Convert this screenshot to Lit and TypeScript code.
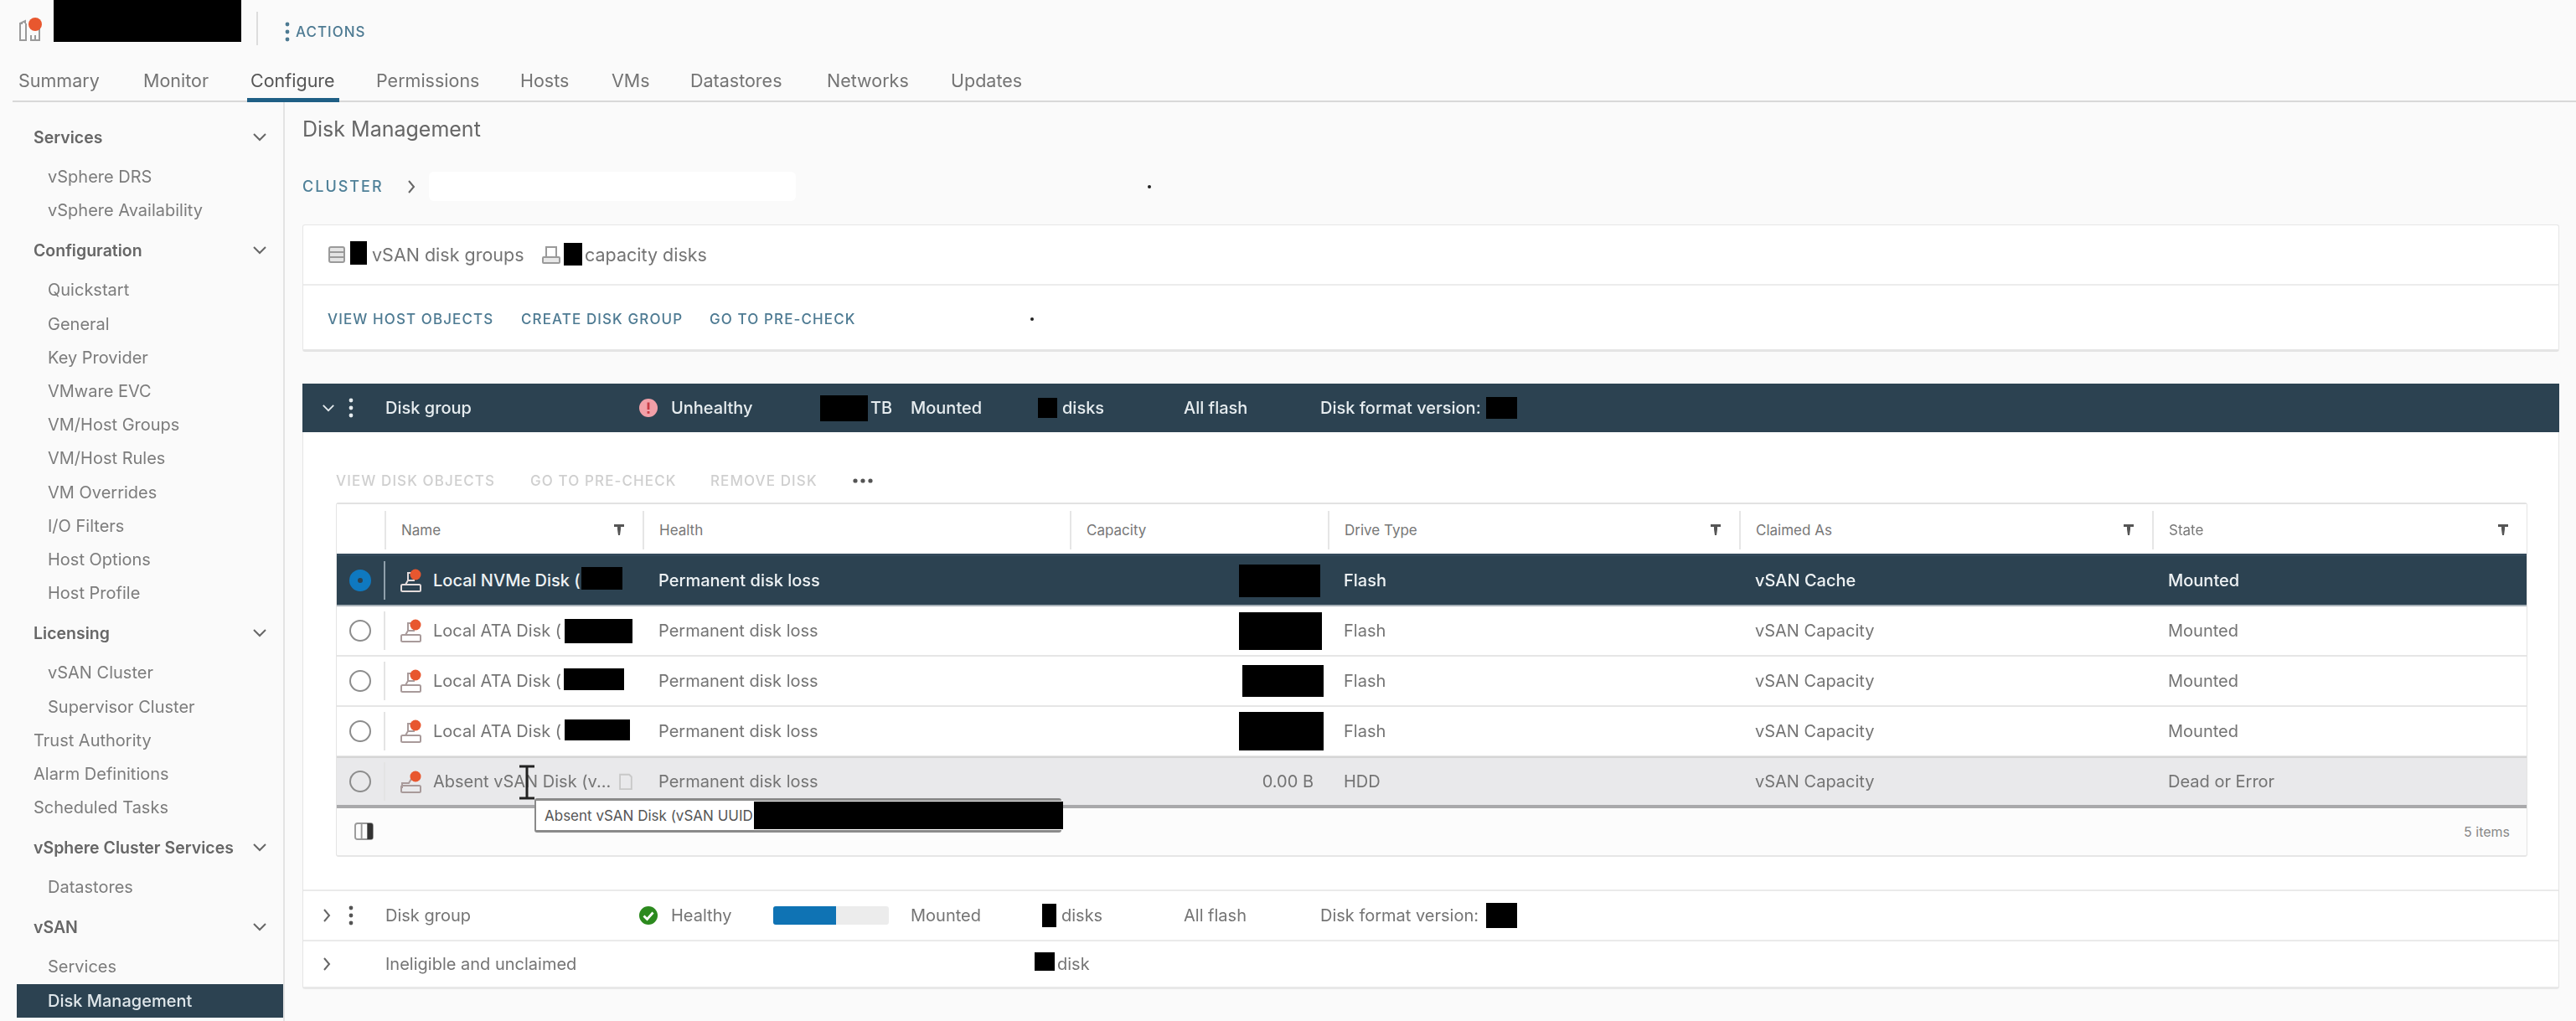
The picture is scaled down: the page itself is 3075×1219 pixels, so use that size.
import { LitElement, html, css, svg } from "lit";
import { customElement } from "lit/decorators.js";

const chevDown = (c = "#666") => html`<svg class="chev" viewBox="0 0 18 12" width="18" height="12"><path d="M2 2l7 7 7-7" fill="none" stroke=${c} stroke-width="2"/></svg>`;
const chevRight = html`<svg viewBox="0 0 12 18" width="12" height="18"><path d="M3 2l6 7-6 7" fill="none" stroke="#666" stroke-width="2"/></svg>`;
const dots = (c: string) => html`<svg viewBox="0 0 6 24" width="6" height="24"><circle cx="3" cy="3" r="2.4" fill=${c}/><circle cx="3" cy="12" r="2.4" fill=${c}/><circle cx="3" cy="21" r="2.4" fill=${c}/></svg>`;
const filterIcon = html`<svg viewBox="0 0 12 14" width="12" height="14"><path d="M0 0h12v3H8v3l-1 7H5L4 6V3H0z" fill="#555"/></svg>`;
const diskIcon = (absent: boolean, light: boolean) => {
  const s = light ? "#e4dcdc" : "#a89a9a";
  return html`<svg viewBox="0 0 26 28" width="26" height="28">
    ${absent ? svg`<path d="M2 22v-6h8l3-5h4" fill="none" stroke=${s} stroke-width="2"/>`
      : svg`<path d="M9 14V5h8M6 19l3-5h8" fill="none" stroke=${s} stroke-width="2"/>`}
    <rect x="1" y="19" width="23" height="8" rx="1.5" fill="none" stroke=${s} stroke-width="2"/>
    <circle cx="18" cy="${absent ? 8 : 7}" r="6.5" fill="#e8572f"/>
  </svg>`;
};

const groups: { t: string; plain?: boolean; items?: string[]; }[] = [
  { t: "Services", items: ["vSphere DRS", "vSphere Availability"] },
  { t: "Configuration", items: ["Quickstart", "General", "Key Provider", "VMware EVC", "VM/Host Groups", "VM/Host Rules", "VM Overrides", "I/O Filters", "Host Options", "Host Profile"] },
  { t: "Licensing", items: ["vSAN Cluster", "Supervisor Cluster"] },
  { t: "Trust Authority", plain: true },
  { t: "Alarm Definitions", plain: true },
  { t: "Scheduled Tasks", plain: true },
  { t: "vSphere Cluster Services", items: ["Datastores"] },
  { t: "vSAN", items: ["Services", "Disk Management"] },
];

const tabs = [["Summary", 149], ["Monitor", 128], ["Configure", 150], ["Permissions", 172], ["Hosts", 109], ["VMs", 94], ["Datastores", 163], ["Networks", 148], ["Updates", 120]] as const;

const rows = [
  { name: "Local NVMe Disk (", nl: 177, nw: 49, nh: 27, ny: 6, cw: 97, ch: 39, cr: 9, type: "Flash", claim: "vSAN Cache", state: "Mounted", cls: "sel" },
  { name: "Local ATA Disk (", nl: 157, nw: 81, nh: 29, ny: 0, cw: 99, ch: 45, cr: 7, type: "Flash", claim: "vSAN Capacity", state: "Mounted", cls: "" },
  { name: "Local ATA Disk (", nl: 156, nw: 72, nh: 26, ny: 4, cw: 97, ch: 38, cr: 5, type: "Flash", claim: "vSAN Capacity", state: "Mounted", cls: "" },
  { name: "Local ATA Disk (", nl: 157, nw: 78, nh: 25, ny: 4, cw: 101, ch: 46, cr: 5, type: "Flash", claim: "vSAN Capacity", state: "Mounted", cls: "" },
  { name: "Absent vSAN Disk (v...", nl: 0, nw: 0, nh: 0, ny: 0, cw: 0, ch: 0, cr: 0, type: "HDD", claim: "vSAN Capacity", state: "Dead or Error", cls: "abs" },
];

@customElement("app-root")
export class AppRoot extends LitElement {
  static styles = css`
    :host { display: block; height: 1219px; overflow: hidden; background: #fafafa; font-family: Inter, "Open Sans", sans-serif; font-size: 20px; color: #747474; }
    .root { filter: blur(0.65px); height: 1219px; }
    .red { display: inline-block; background: #000; flex: none; }
    .head { height: 65px; display: flex; align-items: center; padding-left: 22px; }
    .head .name { width: 224px; height: 50px; margin: -16px 18px 0 12px; }
    .head .sep { width: 2px; height: 40px; background: #ddd; margin: 2px 0 0; }
    .head .dots { margin: 10px 7px 0 32px; display: flex; }
    .head .act { margin-top: 10px; font-size: 17px; font-weight: 500; letter-spacing: 1px; color: #4d7a92; }
    .tabs { height: 57px; display: flex; margin-left: 15px; border-bottom: 2px solid #d8d8d8; box-sizing: border-box; padding-left: 7px; }
    .tab { font-size: 21.5px; color: #747474; height: 55px; padding-top: 18px; box-sizing: border-box; flex: none; position: relative; }
    .tab.on { color: #555; }
    .tab.on::after { content: ""; position: absolute; left: -4px; width: 110px; bottom: -2px; height: 5px; background: #1f5f85; }
    .body { display: grid; grid-template-columns: 340px 1fr; height: 1097px; }
    .side { margin-left: 20px; padding-top: 14px; border-right: 2px solid #e3e3e3; color: #7c7c7c; }
    .gh { height: 55px; display: flex; align-items: center; justify-content: space-between; padding: 0 19px 0 20px; font-weight: 600; color: #666; font-size: 19.5px; }
    .pl { height: 40.2px; display: flex; align-items: center; padding-left: 20px; }
    .it { height: 40.2px; display: flex; align-items: center; padding-left: 37px; }
    .it.on { background: #2c4251; color: #dfe6ea; font-weight: 500; }
    .chev { flex: none; }
    .main { padding: 0 20px 0 21px; min-width: 0; }
    .title { height: 62px; padding-top: 1px; box-sizing: border-box; display: flex; align-items: center; font-size: 25px; color: #666; }
    .crumb { height: 35px; margin-top: 21px; display: flex; align-items: center; }
    .crumb b { font-weight: 500; font-size: 18px; letter-spacing: 2px; color: #4f8098; width: 124px; }
    .crumb i { display: block; width: 438px; height: 35px; background: #fff; margin-left: 15px; border-radius: 6px; }
    .speck { width: 4px; height: 4px; border-radius: 50%; background: #222; flex: none; }
    .crumb .speck { margin-left: 420px; }
    .card { margin-top: 28px; height: 152px; background: #fff; border: 1px solid #e6e6e6; box-sizing: border-box; border-bottom: 3px solid #e4e4e4; border-radius: 3px; }
    .c1 { height: 72px; display: flex; align-items: center; padding-left: 30px; border-bottom: 2px solid #ececec; box-sizing: border-box; font-size: 21.5px; white-space: nowrap; }
    .c1 svg { margin-right: 6px; }
    .c1 .txt { margin: 0 18px 0 6px; width: 184px; }
    .c1 .txt.w2 { width: auto; }
    .c2 { height: 76px; padding-top: 4px; box-sizing: border-box; display: flex; align-items: center; padding-left: 29px; font-size: 17px; font-weight: 500; letter-spacing: 1.1px; color: #4d7a92; }
    .c2 span { flex: none; }
    .group { margin-top: 38px; height: 723px; background: #fff; border: 1px solid #e4e4e4; border-top: none; border-bottom: 3px solid #e8e8e8; box-sizing: border-box; border-radius: 3px; }
    .gr { display: grid; grid-template-columns: 32px 44px 302px 39px 122px 164px 152px 174px 163px 1fr; align-items: center; padding-left: 22px; height: 60px; box-sizing: border-box; white-space: nowrap; }
    .gr.dark { background: #2c4251; color: #e6ecef; height: 58px; margin: 0 -1px; padding-left: 23px; font-weight: 500; }
    .gr.line { border-top: 2px solid #eaeaea; }
    .gr.last { height: 56px; }
    .flx { display: flex; align-items: center; gap: 3px; }
    .bar { width: 138px; height: 22px; border-radius: 3px; background: #ececec; overflow: hidden; }
    .bar div { height: 100%; background: #0f73b4; }
    .pad { padding: 0 37px 0 39px; height: 546px; box-sizing: border-box; }
    .tb { height: 84px; display: flex; align-items: flex-end; font-size: 17px; font-weight: 500; letter-spacing: 1.1px; color: #cfcfcf; padding-bottom: 16px; box-sizing: border-box; }
    .tb span { flex: none; }
    .table { border: 1px solid #e4e4e4; border-top: 2px solid #e2e2e2; border-bottom: 2px solid #e6e6e6; border-radius: 3px; height: 423px; box-sizing: border-box; position: relative; background: #fcfcfc; }
    .tr { display: grid; grid-template-columns: 57px 308px 510px 308px 491px 493px 1fr; background: #fff; height: 60px; box-sizing: border-box; border-bottom: 2px solid #e6e6e6; align-items: center; }
    .tr.h { height: 62px; font-size: 17px; color: #777; background: #fff; border-bottom: 3px solid #33495a; padding-top: 3px; }
    .tr.h .c { border-left: 2px solid #e6e6e6; height: 46px; display: flex; align-items: center; justify-content: space-between; padding: 0 22px 0 18px; }
    .tr.sel { background: #2c4251; color: #eef2f4; font-weight: 500; border-bottom: 2px solid #a6b0b7; }
    .tr.abs { background: #e9e9eb; height: 62px; border-top: 2px solid #d5d5d5; border-bottom: 4px solid #a9a9ab; margin-top: -1px; }
    .rad { height: 46px; display: flex; align-items: center; justify-content: center; border-right: 2px solid #e4e4e4; margin-right: -1px; }
    .sel .rad { border-right-color: #8fa0ab; }
    .circ { width: 22px; height: 22px; border: 2.5px solid #8d8d8d; border-radius: 50%; background: #fff; }
    .abs .circ { background: transparent; }
    .sel .circ { background: #0f79c0; border-color: #0f79c0; position: relative; }
    .sel .circ::after { content: ""; position: absolute; left: 8px; top: 8px; width: 6px; height: 6px; border-radius: 50%; background: #2c4251; }
    .nm { display: flex; align-items: center; padding-left: 19px; white-space: nowrap; min-width: 0; }
    .nm svg { margin-right: 13px; flex: none; }
    .nm .copy { margin: 0 0 0 8px; }
    .td { padding-left: 19px; white-space: nowrap; }
    .cap { display: flex; justify-content: flex-end; align-items: center; }
    .cap span { margin-right: 17px; }
    .ft { height: 55px; display: flex; align-items: center; justify-content: space-between; padding: 0 20px 0 21px; font-size: 16px; color: #888; }
    .tip { position: absolute; left: 236px; top: 351px; width: 629px; height: 41px; border: 2px solid #8a8a8a; border-top-width: 3px; border-bottom-width: 3px; border-right: none; background: #fff; border-radius: 3px; box-sizing: border-box; display: flex; align-items: center; padding-left: 10px; font-size: 17px; color: #555; white-space: nowrap; }
    .tip .red { position: absolute; left: 260px; top: 1px; width: 369px; height: 33px; }
    .cursor { position: absolute; left: 216px; top: 311px; }
  `;

  private groupRow(dark: boolean) {
    const c = dark ? "#e6ecef" : "#555";
    return html`<div class="gr ${dark ? "dark" : "line"}">
      ${dark ? html`<svg viewBox="0 0 18 12" width="16" height="11"><path d="M2 2l7 7 7-7" fill="none" stroke="#e6ecef" stroke-width="2"/></svg>` : chevRight}
      <div class="flx">${dots(c)}</div>
      <div>Disk group</div>
      <div class="flx">
        ${dark
          ? html`<svg viewBox="0 0 24 24" width="24" height="24"><circle cx="12" cy="12" r="11" fill="#f2a0a8"/><rect x="10.6" y="5.5" width="2.8" height="8.5" fill="#c73a44"/><rect x="10.6" y="16" width="2.8" height="2.8" fill="#c73a44"/></svg>`
          : html`<svg viewBox="0 0 24 24" width="24" height="24"><circle cx="12" cy="12" r="11" fill="#2c8a1e"/><path d="M6.5 12.5l4 4 7-8" fill="none" stroke="#fff" stroke-width="2.8"/></svg>`}
      </div>
      <div>${dark ? "Unhealthy" : "Healthy"}</div>
      <div class="flx">
        ${dark
          ? html`<span class="red" style="width:57px;height:31px;margin-left:56px"></span><span>TB</span>`
          : html`<div class="bar"><div style="width:54%"></div></div>`}
      </div>
      <div>Mounted</div>
      <div class="flx"><span class="red" style="width:${dark ? 23 : 17}px;height:${dark ? 24 : 28}px;margin-left:${dark ? 0 : 5}px;margin-right:3px"></span><span>disks</span></div>
      <div>All flash</div>
      <div class="flx" style="gap:0"><span style="width:198px">Disk format version:</span><span class="red" style="width:37px;height:${dark ? 26 : 30}px"></span></div>
    </div>`;
  }

  render() {
    return html`<div class="root">
      <div class="head">
        <svg viewBox="0 0 30 30" width="30" height="30" style="margin-top:4px;flex:none"><path d="M5 8H2v20h8M9 8v20M15 22v6h10v-14M20 28v-6" fill="none" stroke="#9a9a9a" stroke-width="2"/><path d="M2 8l6-3v3" fill="none" stroke="#9a9a9a" stroke-width="2"/><circle cx="20" cy="9" r="8" fill="#e8572f"/></svg>
        <span class="red name"></span>
        <div class="sep"></div>
        <div class="dots">${dots("#4d7a92")}</div>
        <div class="act">ACTIONS</div>
      </div>
      <div class="tabs">
        ${tabs.map(([t, w]) => html`<div class="tab ${t === "Configure" ? "on" : ""}" style="width:${w}px">${t}</div>`)}
      </div>
      <div class="body">
        <div class="side">
          ${groups.map((g) => g.plain
            ? html`<div class="pl">${g.t}</div>`
            : html`<div class="gh"><span>${g.t}</span>${chevDown()}</div>
              ${g.items!.map((i) => html`<div class="it ${i === "Disk Management" ? "on" : ""}">${i}</div>`)}`)}
        </div>
        <div class="main">
          <div class="title">Disk Management</div>
          <div class="crumb"><b>CLUSTER</b>${chevRight}<i></i><span class="speck"></span></div>
          <div class="card">
            <div class="c1">
              <svg viewBox="0 0 20 22" width="20" height="22"><rect x="1" y="2" width="18" height="18" rx="2" fill="#e4e4e4" stroke="#9a9a9a" stroke-width="2"/><path d="M1 8h18M1 14h18" stroke="#9a9a9a" stroke-width="2"/></svg>
              <span class="red" style="width:20px;height:28px;margin-top:-4px"></span>
              <span class="txt">vSAN disk groups</span>
              <svg viewBox="0 0 24 24" width="24" height="24" style="margin-right:3px"><path d="M6 15V3h12v12" fill="none" stroke="#9a9a9a" stroke-width="2"/><rect x="2" y="15" width="20" height="7" rx="1" fill="#e8e8e8" stroke="#9a9a9a" stroke-width="2"/></svg>
              <span class="red" style="width:22px;height:27px;margin-top:-2px"></span>
              <span class="txt w2" style="margin-left:3px">capacity disks</span>
            </div>
            <div class="c2">
              <span style="width:231px">VIEW HOST OBJECTS</span>
              <span style="width:225px">CREATE DISK GROUP</span>
              <span style="width:383px">GO TO PRE-CHECK</span>
              <span class="speck"></span>
            </div>
          </div>
          <div class="group">
            ${this.groupRow(true)}
            <div class="pad">
              <div class="tb">
                <span style="width:232px">VIEW DISK OBJECTS</span>
                <span style="width:215px">GO TO PRE-CHECK</span>
                <span style="width:170px">REMOVE DISK</span>
                <svg viewBox="0 0 24 6" width="24" height="6" style="margin-bottom:7px"><circle cx="3" cy="3" r="2.6" fill="#555"/><circle cx="12" cy="3" r="2.6" fill="#555"/><circle cx="21" cy="3" r="2.6" fill="#555"/></svg>
              </div>
              <div class="table">
                <div class="tr h">
                  <div></div>
                  <div class="c">Name ${filterIcon}</div>
                  <div class="c">Health</div>
                  <div class="c">Capacity</div>
                  <div class="c">Drive Type ${filterIcon}</div>
                  <div class="c">Claimed As ${filterIcon}</div>
                  <div class="c">State ${filterIcon}</div>
                </div>
                ${rows.map((r) => html`<div class="tr ${r.cls}">
                  <div class="rad"><div class="circ"></div></div>
                  <div class="nm">
                    ${diskIcon(r.cls === "abs", r.cls === "sel")}
                    <span style=${r.nl ? `width:${r.nl}px;overflow:hidden` : ""}>${r.name}</span>
                    ${r.nw ? html`<span class="red" style="width:${r.nw}px;height:${r.nh}px;margin-bottom:${r.ny}px"></span>` : html`<svg class="copy" viewBox="0 0 20 24" width="19" height="22"><path d="M5 3h10l3 3v16H3V3z" fill="none" stroke="#c8c8c8" stroke-width="2"/></svg>`}
                  </div>
                  <div class="td">Permanent disk loss</div>
                  <div class="cap">${r.cw ? html`<span class="red" style="width:${r.cw}px;height:${r.ch}px;margin-right:${r.cr}px"></span>` : html`<span>0.00 B</span>`}</div>
                  <div class="td">${r.type}</div>
                  <div class="td">${r.claim}</div>
                  <div class="td">${r.state}</div>
                </div>`)}
                <div class="ft">
                  <svg viewBox="0 0 24 22" width="23" height="21"><rect x="1" y="1" width="22" height="20" rx="3" fill="none" stroke="#999" stroke-width="2"/><path d="M9 1v20" stroke="#999" stroke-width="2"/><path d="M16 1h5a2 2 0 012 2v16a2 2 0 01-2 2h-5z" fill="#333"/></svg>
                  <span>5 items</span>
                </div>
                <div class="tip"><span>Absent vSAN Disk (vSAN UUID</span><span class="red"></span></div>
                <svg class="cursor" viewBox="0 0 22 42" width="22" height="42"><path d="M2 2h18M2 40h18M11 2v38" fill="none" stroke="#222" stroke-width="3"/></svg>
              </div>
            </div>
            ${this.groupRow(false)}
            <div class="gr line last">
              ${chevRight}<div></div>
              <div style="grid-column: 3 / 8">Ineligible and unclaimed</div>
              <div class="flx"><span class="red" style="width:24px;height:22px;margin:-6px 0 0 -4px"></span><span>disk</span></div>
            </div>
          </div>
        </div>
      </div>
    </div>`;
  }
}
